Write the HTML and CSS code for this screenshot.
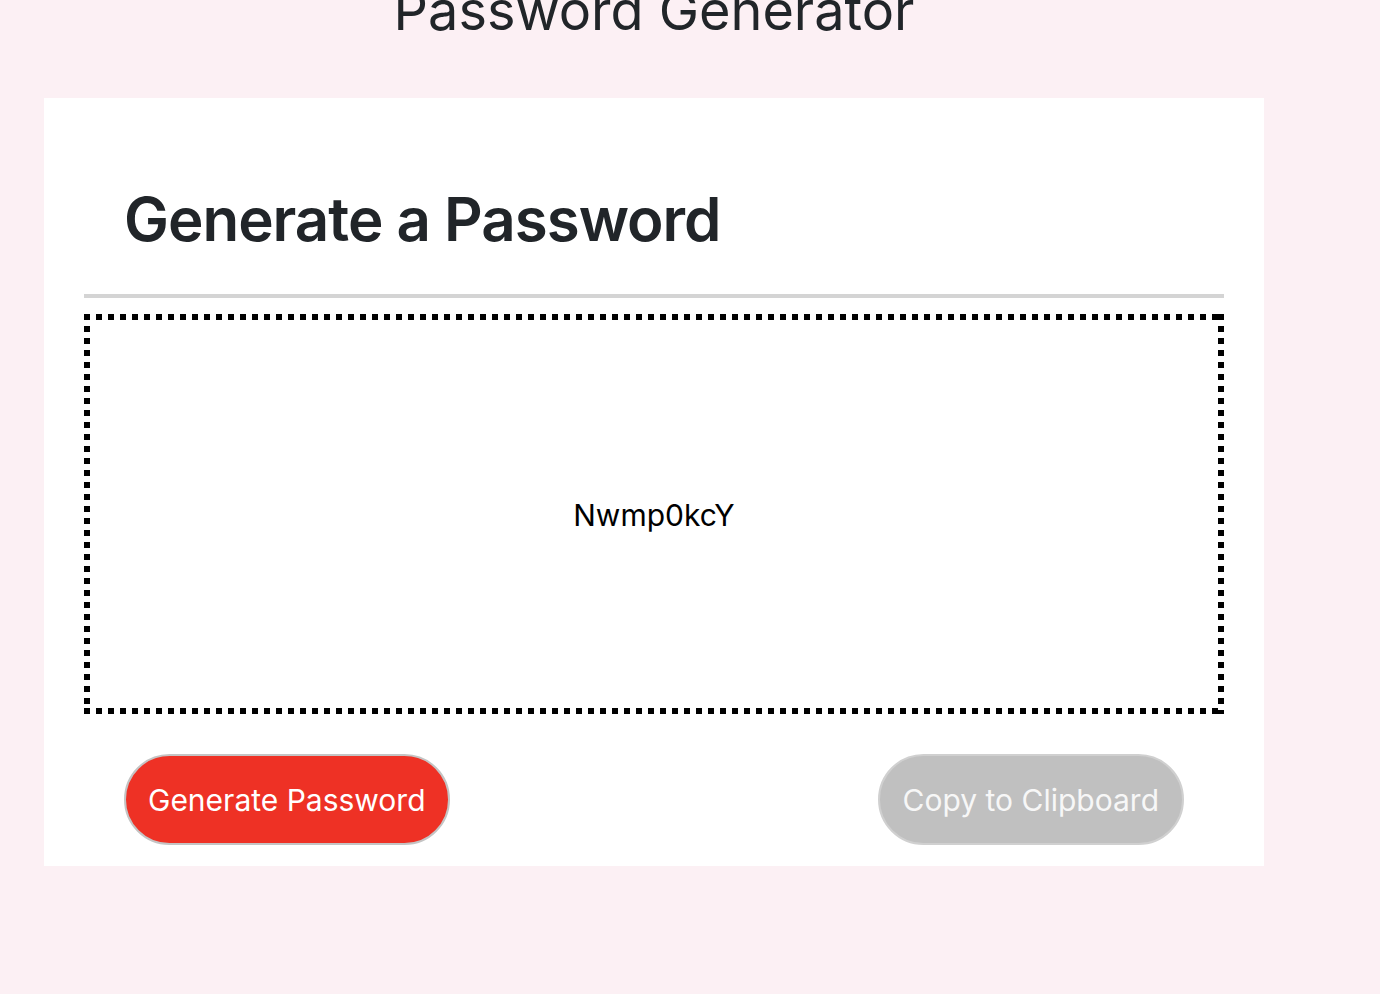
FILE: index.html
```html
<!DOCTYPE html>
<html lang="en">
<head>
<meta charset="UTF-8">
<title>Password Generator</title>
<link rel="stylesheet" href="styles.css">
</head>
<body>
<div class="wrapper">
  <header class="page-header">
    <h1 class="page-title">Password Generator</h1>
  </header>
  <main class="card">
    <div class="card-header">
      <h2 class="card-title">Generate a Password</h2>
    </div>
    <div class="card-rule"></div>
    <div class="card-body">
      <div class="password-box">Nwmp0kcY</div>
    </div>
    <div class="card-footer">
      <button class="btn btn-generate" type="button">Generate Password</button>
      <button class="btn btn-copy" type="button">Copy to Clipboard</button>
    </div>
  </main>
</div>
</body>
</html>
```

FILE: styles.css
```css
* {
  box-sizing: border-box;
}

html,
body {
  margin: 0;
  padding: 0;
}

body {
  background: #fcf0f4;
  font-family: Inter, "Liberation Sans", Arial, sans-serif;
  color: #212529;
  height: 994px;
  overflow: hidden;
}

.wrapper {
  width: 1220px;
  margin-left: 44px;
}

.page-header {
  text-align: center;
  margin-bottom: 55px;
}

.page-title {
  margin: -21px 0 0;
  font-size: 54px;
  line-height: 64px;
  font-weight: 400;
  color: #212529;
}

.card {
  display: block;
  background: #ffffff;
  padding: 0 40px 21px;
}

.card-header {
  padding: 86px 40px 0;
}

.card-title {
  margin: 0;
  font-size: 60px;
  line-height: 70px;
  letter-spacing: -1px;
  font-weight: 600;
  color: #212529;
}

.card-rule {
  margin-top: 40px;
  height: 4px;
  background: #d4d4d4;
}

.card-body {
  margin-top: 16px;
}

.password-box {
  height: 400px;
  display: flex;
  align-items: center;
  justify-content: center;
  font-size: 30px;
  color: #000;
  background-image:
    repeating-linear-gradient(to right, #000 0 6px, transparent 6px 12px),
    repeating-linear-gradient(to right, #000 0 6px, transparent 6px 12px),
    repeating-linear-gradient(to bottom, #000 0 6px, transparent 6px 12px),
    repeating-linear-gradient(to bottom, #000 0 6px, transparent 6px 12px);
  background-size: 100% 6px, 100% 6px, 6px 100%, 6px 100%;
  background-position: left top, left bottom, left top, right top;
  background-repeat: no-repeat;
  padding-top: 2px;
}

.card-footer {
  margin-top: 40px;
  padding: 0 40px;
  display: flex;
  justify-content: space-between;
}

.btn {
  height: 91px;
  border-radius: 46px;
  font-family: Inter, "Liberation Sans", Arial, sans-serif;
  font-size: 30px;
  font-weight: 400;
  color: #ffffff;
  padding: 0 22px;
  cursor: pointer;
}

.btn-generate {
  background: #ee3125;
  border: 2px solid #c4c4c4;
}

.btn-copy {
  background: #c0c0c0;
  border: 2px solid #d0d0d0;
  color: #f7f7f7;
  padding: 0 23px;
}
```
